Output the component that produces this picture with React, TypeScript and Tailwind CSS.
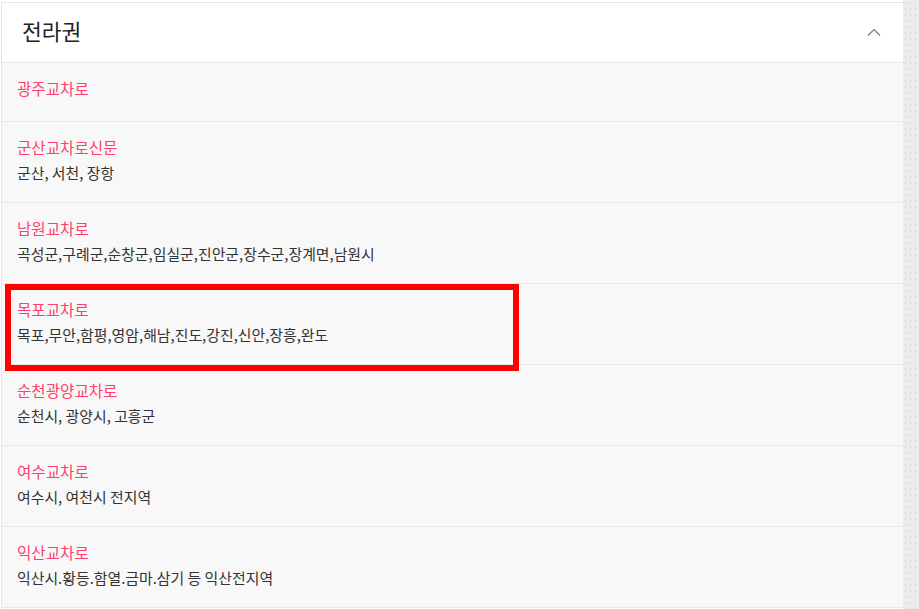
import React from "react";

const regions = [
  { name: "광주교차로", desc: "" },
  { name: "군산교차로신문", desc: "군산, 서천, 장항" },
  { name: "남원교차로", desc: "곡성군,구례군,순창군,임실군,진안군,장수군,장계면,남원시" },
  { name: "목포교차로", desc: "목포,무안,함평,영암,해남,진도,강진,신안,장흥,완도", marked: true },
  { name: "순천광양교차로", desc: "순천시, 광양시, 고흥군" },
  { name: "여수교차로", desc: "여수시, 여천시 전지역" },
  { name: "익산교차로", desc: "익산시.황등.함열.금마.삼기 등 익산전지역" },
];

const App: React.FC = () => {
  return (
    <div
      className="flex w-[919px] h-[609px] overflow-hidden bg-white"
      style={{ fontFamily: '"Noto Sans CJK KR", "Noto Sans", sans-serif' }}
    >
      {/* PANEL */}
      <div className="w-[902px] mt-[2px] ml-[1px] border-l border-t border-[#e6e6e6] flex flex-col">
        {/* HEADER */}
        <div className="h-[60px] shrink-0 flex items-center justify-between pl-[20px] pr-[22px] bg-white border-b border-[#e8e8e8]">
          <h2 className="text-[21.5px] font-normal text-[#222] leading-none -mt-[3px]">전라권</h2>
          <svg width="14" height="8" viewBox="0 0 14 8" fill="none" className="-mt-[1px]">
            <path d="M1 7.5L7 1.5L13 7.5" stroke="#777" strokeWidth="1.1" />
          </svg>
        </div>

        {/* LIST */}
        <div className="flex flex-col bg-[#f8f8f8]">
          {regions.map((r) =>
            r.desc ? (
              <div
                key={r.name}
                className="relative h-[81px] shrink-0 border-b border-[#e8e8e8] px-[15px] pt-[15px]"
              >
                <div className="text-[15.6px] leading-[21px] text-[#ff3f6c]">{r.name}</div>
                <div className="mt-[4px] text-[14.9px] leading-[21px] text-[#333]">{r.desc}</div>
                {r.marked && (
                  <div className="absolute left-[3px] top-0 w-[514px] h-[87px] border-[6px] border-[#ff0000] z-10" />
                )}
              </div>
            ) : (
              <div
                key={r.name}
                className="h-[59px] shrink-0 border-b border-[#e8e8e8] px-[15px] flex items-center"
              >
                <div className="text-[15.6px] leading-[21px] text-[#ff3f6c] -mt-[7px]">{r.name}</div>
              </div>
            )
          )}
        </div>
      </div>

      {/* RIGHT STRIP */}
      <div className="flex-1 bg-[#ececec] bg-[radial-gradient(#d6d6d6_0.7px,transparent_0.8px)] bg-[length:5px_6px]" />
    </div>
  );
};

export default App;
